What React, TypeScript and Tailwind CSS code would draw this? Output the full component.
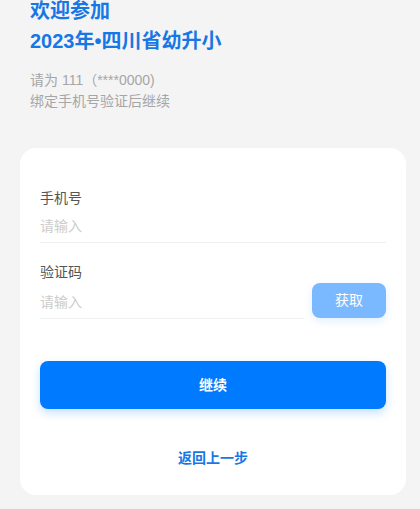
export default function App() {
  return (
    <div
      className="min-h-[509px] bg-[#f4f4f4] pl-5 pr-[14px] pb-4"
      style={{ fontFamily: '"Liberation Sans", "Noto Sans CJK SC", sans-serif' }}
    >
      {/* Header */}
      <div className="px-[10px] -mt-[4px]">
        <h1 className="text-[20px] leading-[30px] font-bold text-[#1677e5]">
          欢迎参加
          <br />
          2023年•四川省幼升小
        </h1>
        <div className="mt-[14px] text-[14px] leading-[21px] text-[#a6a6a6]">
          <p>请为 111（****0000)</p>
          <p>绑定手机号验证后继续</p>
        </div>
      </div>

      {/* Form card */}
      <div className="mt-[36px] bg-white rounded-2xl px-5 pt-10 pb-[26px]">
        <label className="block text-[14px] leading-[21px] text-[#555]">手机号</label>
        <input
          placeholder="请输入"
          className="w-full h-[34px] text-[14px] text-[#333] placeholder:text-[#cccccc] border-b border-[#f0f0f0] outline-none bg-transparent"
        />

        <label className="block mt-[19px] text-[14px] leading-[21px] text-[#555]">验证码</label>
        <div className="flex items-end gap-2">
          <input
            placeholder="请输入"
            className="flex-1 min-w-0 h-[33px] text-[14px] text-[#333] placeholder:text-[#cccccc] border-b border-[#f0f0f0] outline-none bg-transparent"
          />
          <button className="w-[74px] h-[35px] mb-[1px] rounded-lg bg-[#7ab8ff] text-white text-[14px] shadow-[0_3px_8px_rgba(0,122,255,0.12)]">
            获取
          </button>
        </div>

        <button className="mt-[42px] w-full h-12 rounded-lg bg-[#007aff] text-white text-[14px] font-bold shadow-[0_4px_10px_rgba(0,122,255,0.22)]">
          继续
        </button>

        <div className="mt-[39px] text-center text-[14px] leading-[21px] font-bold text-[#1677e5]">
          返回上一步
        </div>
      </div>
    </div>
  );
}
